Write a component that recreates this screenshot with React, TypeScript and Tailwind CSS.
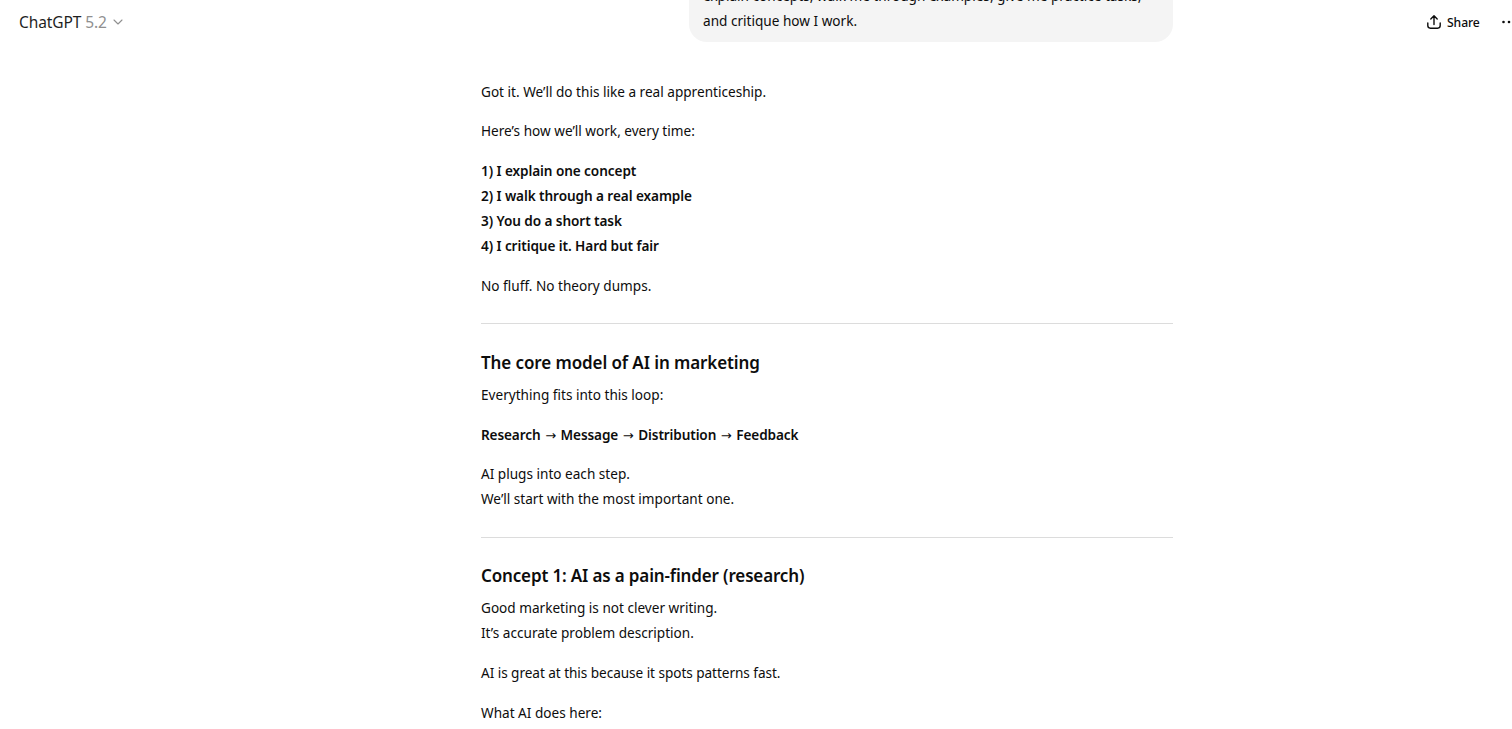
import type { ReactNode } from "react";
import { ChevronDown } from "lucide-react";

const P = ({ children }: { children: ReactNode }) => (
  <p className="mb-[14.45px]">{children}</p>
);

const Arrow = () => (
  <span className="mx-[1.25px] font-['DejaVu_Sans',sans-serif] text-[13px] leading-none font-normal">→</span>
);

const App = () => {
  return (
    <div className="relative h-[729px] w-full overflow-hidden bg-white font-['Noto_Sans',sans-serif] text-[13.6px] leading-[25px] text-[#0d0d0d]">
      <header className="absolute top-0 left-0 right-0 flex h-[44px] items-center justify-between pl-[19px]">
        <div className="flex items-center text-[15.5px] tracking-[-0.1px] text-[#1f1f1f]">
          <span>ChatGPT</span>
          <span className="ml-[4px] text-[#8f8f8f]">5.2</span>
          <ChevronDown className="ml-[3px] h-[16px] w-[16px] text-[#8f8f8f]" strokeWidth={1.6} />
        </div>
        <div className="flex w-[86px] items-center overflow-hidden">
          <svg viewBox="0 0 16 16" fill="none" stroke="#0d0d0d" strokeWidth="1.4" strokeLinecap="round" strokeLinejoin="round" className="h-[16px] w-[16px] shrink-0">
            <path d="M8 10.5V2M4.8 5 8 1.8 11.2 5" />
            <path d="M1.8 9v2.6c0 1.5 1 2.6 2.6 2.6h7.2c1.6 0 2.6-1.100 2.600-2.600V9" />
          </svg>
          <span className="ml-[5px] shrink-0 text-[12.2px] tracking-[-0.1px] font-medium">Share</span>
          <svg viewBox="0 0 16 16" fill="#0d0d0d" className="ml-[21px] h-[16px] w-[16px] shrink-0">
            <circle cx="2.5" cy="8" r="1.300" />
            <circle cx="8" cy="8" r="1.300" />
            <circle cx="13.500" cy="8" r="1.300" />
          </svg>
        </div>
      </header>

      <main className="ml-[481px] w-[692px]">
        <div className="-mt-[25px] ml-[208px] mb-[37px] rounded-[18px] bg-[#f4f4f4] px-[14px] pt-[8px] pb-[9px]">
          <p>explain concepts, walk me through examples, give me practice tasks,</p>
          <p>and critique how I work.</p>
        </div>

        <P>Got it. We’ll do this like a real apprenticeship.</P>
        <P>Here’s how we’ll work, every time:</P>
        <div className="mb-[15px] tracking-[-0.08px] font-semibold">
          <p>1) I explain one concept</p>
          <p>2) I walk through a real example</p>
          <p>3) You do a short task</p>
          <p>4) I critique it. Hard but fair</p>
        </div>
        <P>No fluff. No theory dumps.</P>

        <hr className="mt-[25px] mb-[25px] border-[#dcdcdc]" />

        <h3 className="mb-[6px] text-[17px] leading-[27px] tracking-[-0.1px] font-semibold">The core model of AI in marketing</h3>
        <p className="mb-[15px]">Everything fits into this loop:</p>
        <p className="mb-[14.5px] tracking-[-0.12px] font-semibold">
          Research <Arrow /> Message <Arrow /> Distribution <Arrow /> Feedback
        </p>
        <div className="mb-[14.5px]">
          <p>AI plugs into each step.</p>
          <p>We’ll start with the most important one.</p>
        </div>

        <hr className="mt-[25.5px] mb-[24px] border-[#dcdcdc]" />

        <h3 className="mb-[6px] text-[17px] leading-[27px] tracking-[-0.15px] font-semibold">Concept 1: AI as a pain-finder (research)</h3>
        <div className="mb-[14.4px] leading-[25.5px]">
          <p>Good marketing is not clever writing.</p>
          <p>It’s accurate problem description.</p>
        </div>
        <p className="mb-[15px] tracking-[-0.05px]">AI is great at this because it spots patterns fast.</p>
        <P>What AI does here:</P>
      </main>
    </div>
  );
};

export default App;
